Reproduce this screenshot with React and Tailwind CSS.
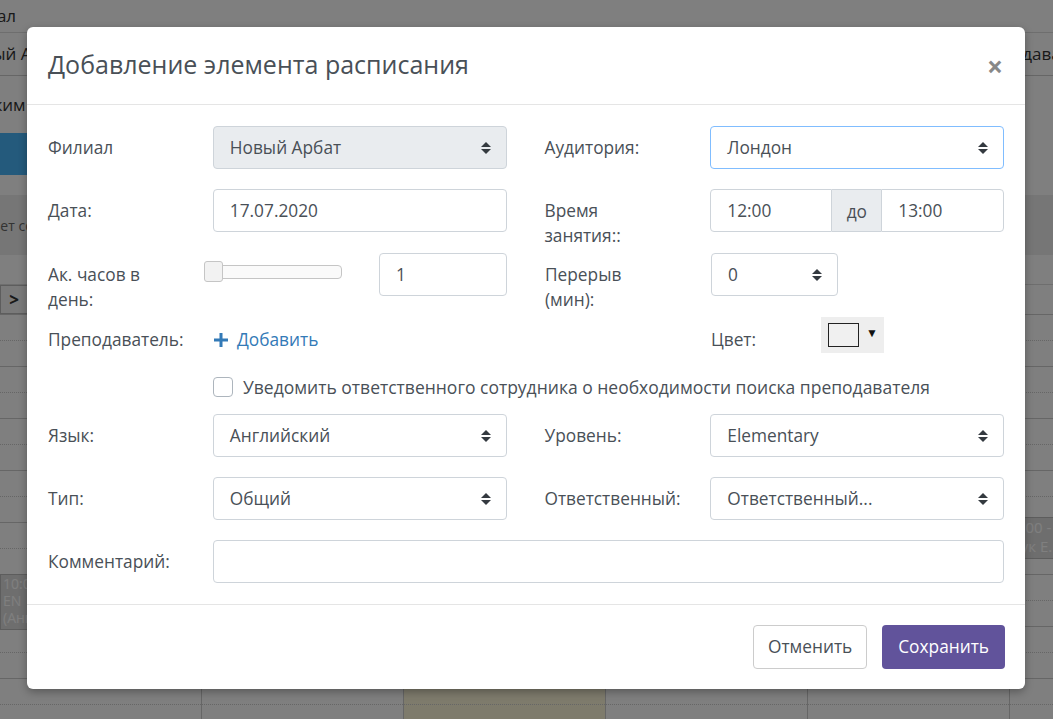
import { useState } from "react";

const Arrows = () => (
  <svg width="10" height="12" viewBox="0 0 10 12" className="shrink-0">
    <path d="M0 5 L5 0 L10 5 Z" fill="#343a40" />
    <path d="M0 7 L10 7 L5 12 Z" fill="#343a40" />
  </svg>
);

const Select = ({ value, className = "", disabled, focused }) => (
  <div
    className={`h-[43px] rounded-[4px] border pl-[16px] pr-[15px] flex items-center justify-between text-[#495057] ${
      disabled ? "bg-[#e9ecef]" : "bg-white"
    } ${focused ? "border-[#80bdff]" : "border-[#ced4da]"} ${className}`}
  >
    <span>{value}</span>
    <Arrows />
  </div>
);

const Input = ({ value = "", className = "" }) => (
  <div
    className={`h-[43px] rounded-[4px] border border-[#ced4da] bg-white pl-[16px] flex items-center text-[#495057] ${className}`}
  >
    {value}
  </div>
);

const Label = ({ children, className = "" }) => (
  <div className={`pt-[9px] leading-[25px] text-[#495057] ${className}`}>{children}</div>
);

const Row = ({ className = "", children }) => (
  <div className={`flex items-start ${className}`}>{children}</div>
);

const Background = () => {
  const rows = Array.from({ length: 16 });
  return (
    <div className="h-screen w-full overflow-hidden bg-white text-[#333] text-[17px]">
      <div className="h-[33px] border-b border-[#ddd] flex items-center -ml-[48px]">Филиал</div>
      <div className="h-[43px] border-b border-[#ccc] flex items-center justify-between">
        <span className="-ml-[40px]">Новый Арбат</span>
        <span className="mr-[-45px]">Преподаватель</span>
      </div>
      <div className="h-[57px] flex items-center -ml-[30px]">Режим</div>
      <div className="h-[42px] bg-[#48b4f8] w-[300px]" />
      <div className="h-[20px]" />
      <div className="h-[60px] bg-[#ececec] flex items-center -ml-[18px] text-[14px] text-[#666]">Цвет события</div>
      <div className="h-[30px] border-b border-[#ddd]" />
      <div className="h-[30px] flex border-b border-[#ccc]">
        <div className="w-[28px] bg-[#f4f4f4] border border-[#bbb] flex items-center justify-center font-bold">&gt;</div>
      </div>
      <div className="flex">
        {[0, 1, 2, 3, 4, 5].map((c) => (
          <div
            key={c}
            className={`relative w-[202px] shrink-0 border-r border-[#ccc] ${c === 2 ? "bg-[#fcf6d8]" : ""}`}
          >
            {rows.map((_, i) => (
              <div
                key={i}
                className={`h-[26px] border-b ${i % 2 ? "border-solid border-[#ccc]" : "border-dotted border-[#ccc]"}`}
              />
            ))}
            {c === 0 && (
              <div className="absolute left-0 top-[259px] w-[120px] h-[56px] bg-[#dddddd] border border-[#bbb] text-[14px] leading-[17px] text-[#fff] px-[2px]">
                10:00 - 11:00
                <br />
                EN
                <br />
                (Англ.)
              </div>
            )}
            {c === 5 && (
              <div className="absolute left-0 top-[202px] w-[140px] h-[42px] bg-[#dddddd] border border-[#bbb] text-[15px] leading-[19px] text-[#fff] px-[2px]">
                8:00 - 9:00
                <br />
                Гук Е.
              </div>
            )}
          </div>
        ))}
      </div>
    </div>
  );
};

export default function App() {
  const [checked, setChecked] = useState(false);
  return (
    <div className="relative h-screen w-full overflow-hidden font-['Open_Sans',sans-serif] text-[17.3px]">
      <Background />
      <div className="absolute inset-0 bg-black/50" />
      <div className="absolute inset-0 flex pt-[27px] pl-[27px]">
        <div className="w-[998px] h-[662px] bg-white rounded-[6px] shadow-[0_3px_9px_rgba(0,0,0,0.3)] flex flex-col">
          <div className="h-[78px] border-b border-[#e5e5e5] flex items-center justify-between pl-[21px] pr-[22px]">
            <h1 className="text-[25px] text-[#495057] pb-[1px]">Добавление элемента расписания</h1>
            <span className="text-[28px] font-bold text-[#888] leading-none">×</span>
          </div>

          <div className="px-[21px] pt-[21px] pb-[21px] border-b border-[#e5e5e5]">
            <Row className="h-[63px]">
              <Label className="w-[165px]">Филиал</Label>
              <Select value="Новый Арбат" disabled className="w-[294px]" />
              <Label className="w-[166px] ml-[38px]">Аудитория:</Label>
              <Select value="Лондон" focused className="w-[294px]" />
            </Row>

            <Row className="h-[64px]">
              <Label className="w-[165px]">Дата:</Label>
              <Input value="17.07.2020" className="w-[294px]" />
              <Label className="w-[166px] ml-[38px]">
                Время
                <br />
                занятия::
              </Label>
              <div className="w-[294px] h-[43px] flex text-[#495057]">
                <div className="w-[122px] rounded-l-[4px] border border-[#ced4da] pl-[16px] flex items-center">12:00</div>
                <div className="w-[49px] bg-[#e9ecef] border-y border-[#ced4da] flex items-center justify-center pt-[3px]">до</div>
                <div className="flex-1 rounded-r-[4px] border border-[#ced4da] pl-[16px] flex items-center">13:00</div>
              </div>
            </Row>

            <Row className="h-[64px]">
              <Label className="w-[165px]">
                Ак. часов в
                <br />
                день:
              </Label>
              <div className="w-[166px] pt-[12px] -ml-[9px]">
                <div className="relative w-[138px] h-[14px] rounded-[4px] border border-[#c5c5c5] bg-[#fafafa]">
                  <div className="absolute -left-[1px] -top-[5px] w-[19px] h-[21px] rounded-[3px] border border-[#c5c5c5] bg-[#f2f2f2]" />
                </div>
              </div>
              <Input value="1" className="w-[128px] ml-[9px]" />
              <Label className="w-[166px] ml-[38px]">
                Перерыв
                <br />
                (мин):
              </Label>
              <Select value="0" className="w-[127px]" />
            </Row>

            <Row className="h-[57px]">
              <Label className="w-[165px] pt-[10px]">Преподаватель:</Label>
              <div className="w-[294px] pt-[10px] leading-[25px] flex items-center text-[#337ab7]">
                <svg width="14" height="14" viewBox="0 0 14 14" className="ml-[1px] mr-[9px]">
                  <path d="M5.5 0 H8.5 V5.5 H14 V8.5 H8.5 V14 H5.5 V8.5 H0 V5.5 H5.5 Z" fill="#337ab7" />
                </svg>
                Добавить
              </div>
              <Label className="w-[110px] ml-[204px] pt-[10px]">Цвет:</Label>
              <div className="w-[63px] h-[36px] bg-[#eeeeee] flex items-start pt-[6px] pl-[7px]">
                <div className="w-[31px] h-[24px] border border-[#222] bg-[#f0f0f0]" />
                <span className="ml-[7px] mt-[3px] text-[12px] leading-[14px] text-[#111]">▼</span>
              </div>
            </Row>

            <Row className="h-[40px] pl-[165px] pt-[3px]">
              <label className="flex items-center cursor-pointer text-[#495057]" onClick={() => setChecked(!checked)}>
                <span
                  className={`w-[20px] h-[20px] rounded-[4px] border border-[#adb5bd] ${checked ? "bg-[#337ab7]" : "bg-white"}`}
                />
                <span className="ml-[10px] leading-[20px] text-[17.5px]">
                  Уведомить ответственного сотрудника о необходимости поиска преподавателя
                </span>
              </label>
            </Row>

            <Row className="h-[63px]">
              <Label className="w-[165px]">Язык:</Label>
              <Select value="Английский" className="w-[294px]" />
              <Label className="w-[166px] ml-[38px]">Уровень:</Label>
              <Select value="Elementary" className="w-[294px]" />
            </Row>

            <Row className="h-[63px]">
              <Label className="w-[165px]">Тип:</Label>
              <Select value="Общий" className="w-[294px]" />
              <Label className="w-[166px] ml-[38px]">Ответственный:</Label>
              <Select value="Ответственный..." className="w-[294px]" />
            </Row>

            <Row>
              <Label className="w-[165px]">Комментарий:</Label>
              <Input className="w-[792px]" />
            </Row>
          </div>

          <div className="flex-1 flex items-start justify-end gap-[15px] pt-[20px] pr-[20px]">
            <button className="h-[44px] px-[14px] rounded-[4px] border border-[#ccc] bg-white text-[#495057]">
              Отменить
            </button>
            <button className="h-[44px] px-[16px] rounded-[4px] bg-[#61539b] text-white">Сохранить</button>
          </div>
        </div>
      </div>
    </div>
  );
}
